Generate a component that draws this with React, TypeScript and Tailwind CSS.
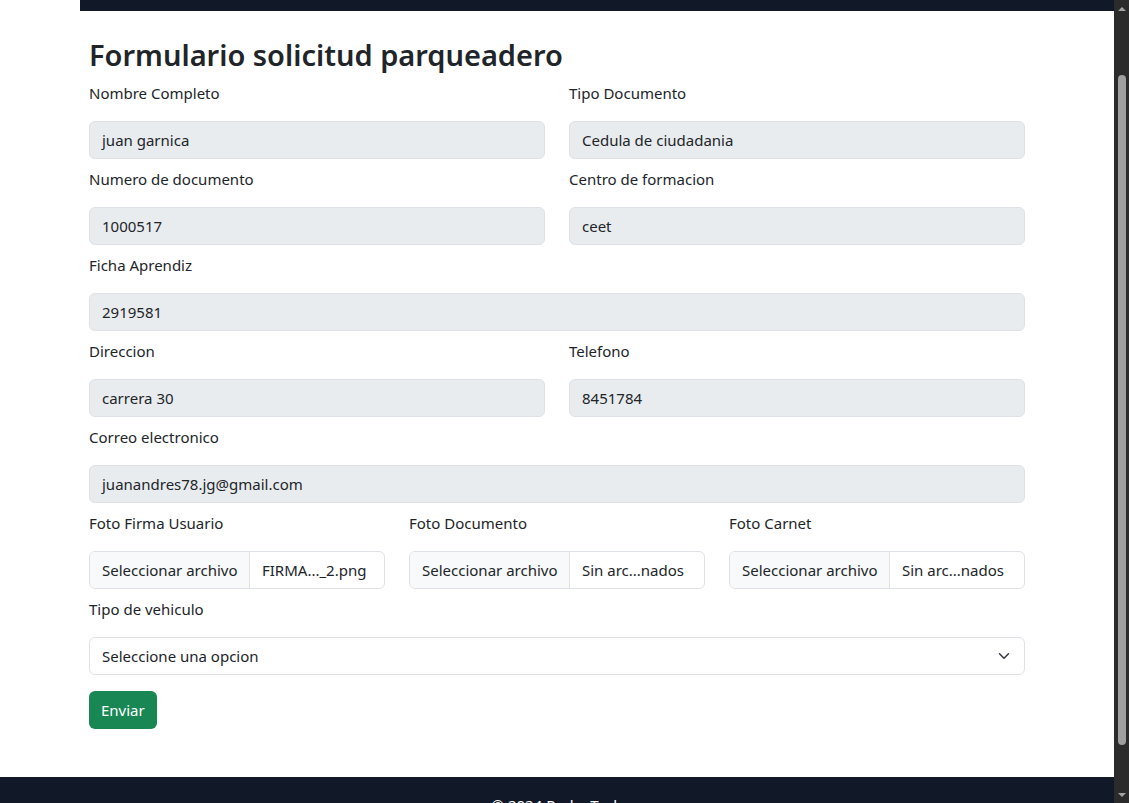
import React from "react";

const font = { fontFamily: '"Noto Sans", "Segoe UI", Arial, sans-serif' };

function Field({ label, value }: { label: string; value: string }) {
  return (
    <div className="flex flex-col">
      <label className="text-[15px] leading-6 text-[#212529] mb-4">{label}</label>
      <div className="h-[38px] rounded-[6px] border border-[#dee2e6] bg-[#e9ecef] px-3 flex items-center text-[15px] text-[#212529]">
        {value}
      </div>
    </div>
  );
}

function FileField({ label, file }: { label: string; file: string }) {
  return (
    <div className="flex flex-col">
      <label className="text-[15px] leading-6 text-[#212529] mb-4">{label}</label>
      <div className="h-[38px] rounded-[6px] border border-[#dee2e6] bg-white flex items-center text-[15px] text-[#212529] overflow-hidden">
        <div className="h-full w-[160px] shrink-0 bg-[#f8f9fa] border-r border-[#dee2e6] flex items-center px-3 whitespace-nowrap">
          Seleccionar archivo
        </div>
        <div className="px-3 whitespace-nowrap">{file}</div>
      </div>
    </div>
  );
}

export default function App() {
  return (
    <div className="h-[803px] w-[1129px] overflow-hidden flex bg-white" style={font}>
      <div className="flex-1 flex flex-col min-w-0">
        <div className="flex h-[11px] shrink-0">
          <div className="w-[80px] bg-white" />
          <div className="flex-1 bg-[#111827]" />
        </div>
        <div className="h-[766px] shrink-0">
          <div className="ml-[89px] w-[936px]">
            <h2 className="mt-[25px] mb-[7px] text-[29px] leading-[38px] font-semibold text-[#212529]">
              Formulario solicitud parqueadero
            </h2>
            <div className="grid grid-cols-2 gap-x-6 gap-y-2">
              <Field label="Nombre Completo" value="juan garnica" />
              <Field label="Tipo Documento" value="Cedula de ciudadania" />
              <Field label="Numero de documento" value="1000517" />
              <Field label="Centro de formacion" value="ceet" />
              <div className="col-span-2">
                <Field label="Ficha Aprendiz" value="2919581" />
              </div>
              <Field label="Direccion" value="carrera 30" />
              <Field label="Telefono" value="8451784" />
              <div className="col-span-2">
                <Field label="Correo electronico" value="juanandres78.jg@gmail.com" />
              </div>
            </div>
            <div className="grid grid-cols-3 gap-x-6 mt-2">
              <FileField label="Foto Firma Usuario" file="FIRMA..._2.png" />
              <FileField label="Foto Documento" file="Sin arc...nados" />
              <FileField label="Foto Carnet" file="Sin arc...nados" />
            </div>
            <div className="flex flex-col mt-2">
              <label className="text-[15px] leading-6 text-[#212529] mb-4">Tipo de vehiculo</label>
              <div className="h-[38px] rounded-[6px] border border-[#dee2e6] bg-white flex items-center justify-between pl-3 pr-3 text-[15px] text-[#212529]">
                <span>Seleccione una opcion</span>
                <svg width="16" height="12" viewBox="0 0 16 16" fill="none" stroke="#343a40" strokeWidth="2" strokeLinecap="round" strokeLinejoin="round">
                  <path d="m2 5 6 6 6-6" />
                </svg>
              </div>
            </div>
            <button className="mt-4 h-[38px] px-3 rounded-[6px] bg-[#198754] text-white text-[15px]">
              Enviar
            </button>
          </div>
        </div>
        <div className="flex-1 bg-[#111827] flex justify-center pt-[16px]">
          <span className="text-white text-[15px] leading-6">© 2024 Parke Tech</span>
        </div>
      </div>
      <div className="w-[15px] shrink-0 bg-[#2b2b2b] flex flex-col items-center">
        <div className="h-[17px] flex items-center justify-center">
          <div className="w-0 h-0 border-l-[4px] border-r-[4px] border-b-[4px] border-l-transparent border-r-transparent border-b-[#a3a3a3]" />
        </div>
        <div className="mt-[58px] w-[8px] h-[670px] rounded-full bg-[#9f9f9f]" />
        <div className="flex-1" />
        <div className="h-[17px] flex items-center justify-center">
          <div className="w-0 h-0 border-l-[4px] border-r-[4px] border-t-[4px] border-l-transparent border-r-transparent border-t-[#a3a3a3]" />
        </div>
      </div>
    </div>
  );
}
